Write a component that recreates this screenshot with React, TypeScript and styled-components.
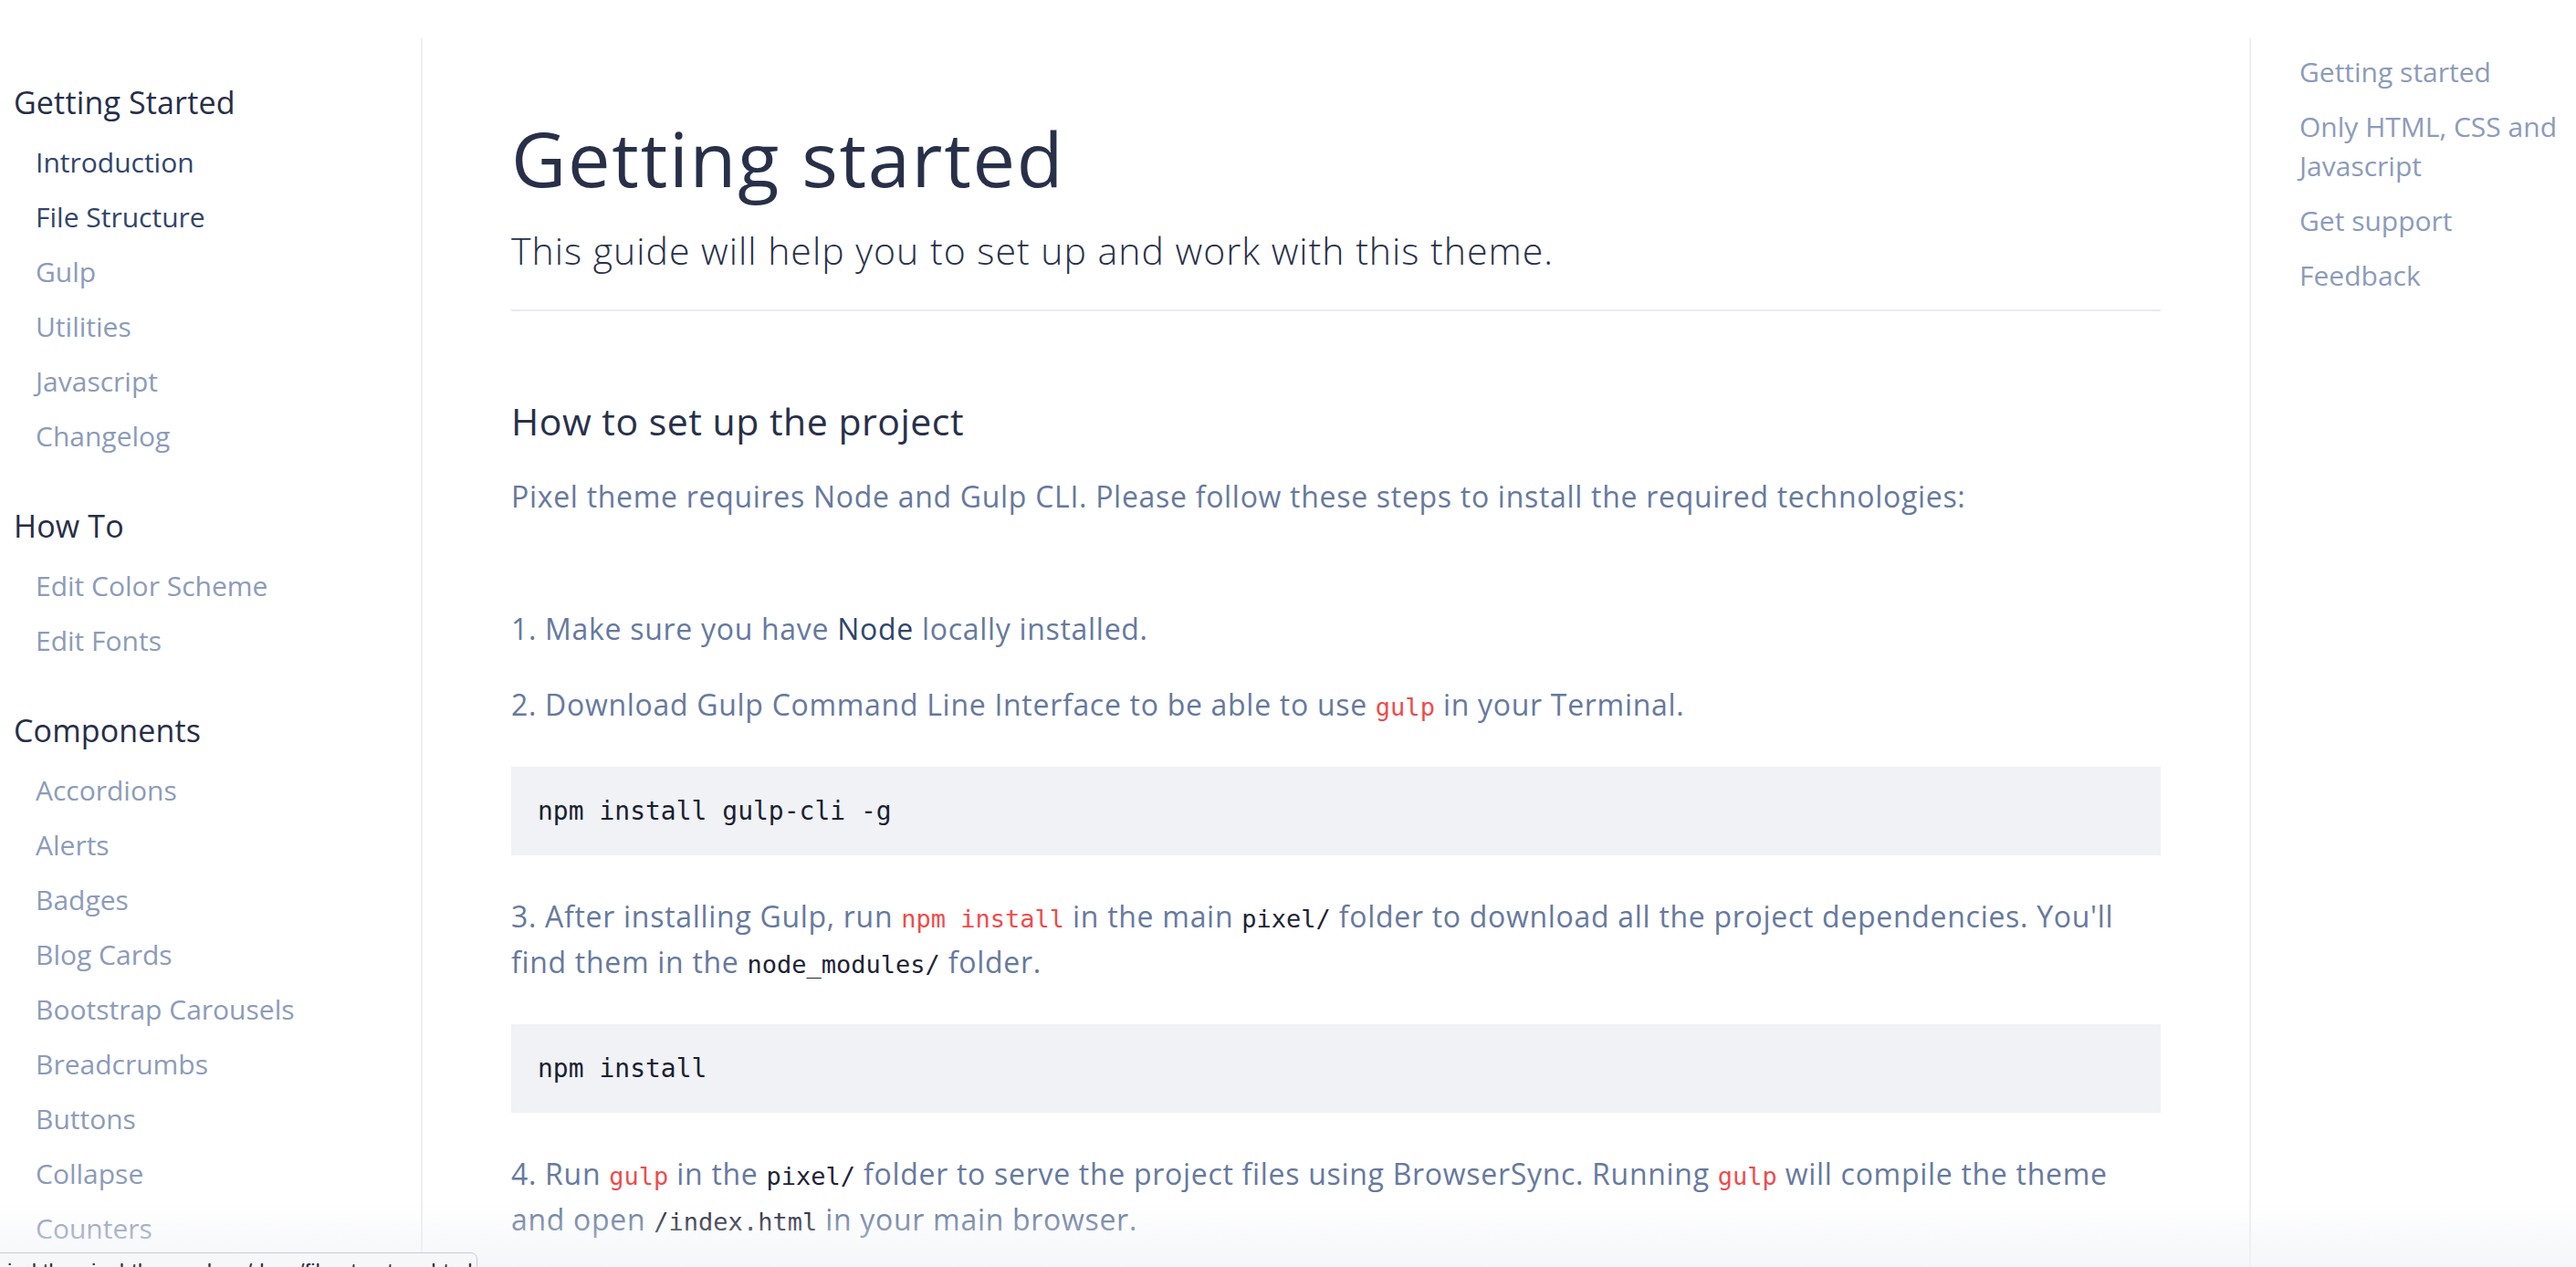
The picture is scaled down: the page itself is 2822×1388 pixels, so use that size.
import React from "react";
import styled, { createGlobalStyle } from "styled-components";

const Global = createGlobalStyle`
  html, body { margin: 0; padding: 0; background: #ffffff; }
  body {
    font-family: "Open Sans", "Noto Sans", sans-serif;
    color: #66799e;
    overflow: hidden;
    height: 1388px;
  }
  * { box-sizing: border-box; }
`;

const Page = styled.div`
  display: grid;
  grid-template-columns: 463px 1fr 358px;
  padding-top: 42px;
  height: 1388px;
  overflow: hidden;
`;

const Sidebar = styled.nav`
  border-right: 2px solid #eceef3;
  padding: 46px 0 0 15px;
  display: flex;
  flex-direction: column;
`;

const Group = styled.div`
  display: flex;
  flex-direction: column;
  margin-bottom: 44px;
`;

const GroupTitle = styled.div`
  font-size: 34px;
  letter-spacing: 0.15px;
  line-height: 48px;
  color: #262e48;
  font-weight: 500;
  margin-bottom: 12px;
`;

const NavItem = styled.a<{ $active?: boolean }>`
  font-size: 30px;
  line-height: 60px;
  padding-left: 24px;
  color: ${(p) => (p.$active ? "#30456b" : "#8c9bb9")};
  text-decoration: none;
  white-space: nowrap;
`;

const Main = styled.main`
  padding: 81px 97px 0 97px;
  display: flex;
  flex-direction: column;
`;

const Title = styled.h1`
  margin: 0;
  font-size: 83px;
  letter-spacing: 1.7px;
  line-height: 100px;
  font-weight: 400;
  color: #283049;
`;

const Lead = styled.p`
  margin: 0;
  font-size: 41px;
  letter-spacing: 1px;
  line-height: 56px;
  font-weight: 300;
  color: #283049;
  padding-top: 23px;
`;

const Divider = styled.hr`
  border: 0;
  border-top: 2px solid #e9eaf0;
  margin: 37px 0 0 0;
`;

const SectionTitle = styled.h3`
  margin: 92px 0 0 0;
  font-size: 41px;
  letter-spacing: 0.5px;
  line-height: 56px;
  font-weight: 400;
  color: #283049;
`;

const Text = styled.p<{ $gap?: number }>`
  margin: ${(p) => p.$gap ?? 33}px 0 0 0;
  font-size: 32px;
  letter-spacing: 0.7px;
  line-height: 50px;
  font-weight: 400;
  color: #66799e;
`;

const Strong = styled.span`
  color: #30456b;
  font-weight: 500;
`;

const Code = styled.code<{ $red?: boolean }>`
  font-family: "DejaVu Sans Mono", "Liberation Mono", monospace;
  font-size: 27px;
  line-height: 1;
  letter-spacing: 0;
  color: ${(p) => (p.$red ? "#ef4b4b" : "#1e2236")};
`;

const CodeBlock = styled.pre`
  margin: 43px 0 0 0;
  background: #f0f2f6;
  height: 97px;
  padding: 0 29px;
  display: flex;
  align-items: center;
  font-family: "DejaVu Sans Mono", "Liberation Mono", monospace;
  font-size: 28px;
  color: #1b1f30;
`;

const Toc = styled.aside`
  border-left: 2px solid #eceef3;
  padding: 15px 0 0 53px;
  display: flex;
  flex-direction: column;
  gap: 17px;
`;

const TocItem = styled.a`
  font-size: 30px;
  line-height: 43px;
  color: #8c9bb9;
  text-decoration: none;
  max-width: 292px;
`;

const Fade = styled.div`
  position: fixed;
  left: 0;
  right: 0;
  bottom: 0;
  height: 70px;
  pointer-events: none;
  background: linear-gradient(to bottom, rgba(244, 245, 248, 0), rgba(240, 242, 246, 0.7));
`;

const StatusBubble = styled.div`
  position: fixed;
  left: -1px;
  bottom: -30px;
  width: 524px;
  height: 46px;
  background: #f6f7f9;
  border: 1px solid #c7cad2;
  border-radius: 0 7px 0 0;
  padding: 6px 0 0 8px;
  font-family: "Liberation Sans", Arial, sans-serif;
  font-size: 24px;
  color: #2b2f38;
  white-space: nowrap;
  overflow: hidden;
`;

const groups: { title: string; items: { label: string; active?: boolean }[] }[] = [
  {
    title: "Getting Started",
    items: [
      { label: "Introduction", active: true },
      { label: "File Structure", active: true },
      { label: "Gulp" },
      { label: "Utilities" },
      { label: "Javascript" },
      { label: "Changelog" },
    ],
  },
  {
    title: "How To",
    items: [{ label: "Edit Color Scheme" }, { label: "Edit Fonts" }],
  },
  {
    title: "Components",
    items: [
      { label: "Accordions" },
      { label: "Alerts" },
      { label: "Badges" },
      { label: "Blog Cards" },
      { label: "Bootstrap Carousels" },
      { label: "Breadcrumbs" },
      { label: "Buttons" },
      { label: "Collapse" },
      { label: "Counters" },
      { label: "Dropdowns" },
      { label: "E-commerce" },
    ],
  },
];

const toc = ["Getting started", "Only HTML, CSS and Javascript", "Get support", "Feedback"];

export default function App() {
  return (
    <>
      <Global />
      <Page>
        <Sidebar>
          {groups.map((g) => (
            <Group key={g.title}>
              <GroupTitle>{g.title}</GroupTitle>
              {g.items.map((it) => (
                <NavItem key={it.label} $active={it.active} href="#">
                  {it.label}
                </NavItem>
              ))}
            </Group>
          ))}
        </Sidebar>
        <Main>
          <Title>Getting started</Title>
          <Lead>This guide will help you to set up and work with this theme.</Lead>
          <Divider />
          <SectionTitle>How to set up the project</SectionTitle>
          <Text $gap={30}>
            Pixel theme requires Node and Gulp CLI. Please follow these steps to install the required
            technologies:
          </Text>
          <Text $gap={95}>
            1. Make sure you have <Strong>Node</Strong> locally installed.
          </Text>
          <Text>
            2. Download Gulp Command Line Interface to be able to use <Code $red>gulp</Code> in your
            Terminal.
          </Text>
          <CodeBlock>npm install gulp-cli -g</CodeBlock>
          <Text $gap={42}>
            3. After installing Gulp, run <Code $red>npm install</Code> in the main <Code>pixel/</Code>{" "}
            folder to download all the project dependencies. You'll find them in the{" "}
            <Code>node_modules/</Code> folder.
          </Text>
          <CodeBlock>npm install</CodeBlock>
          <Text $gap={42}>
            4. Run <Code $red>gulp</Code> in the <Code>pixel/</Code> folder to serve the project files
            using BrowserSync. Running <Code $red>gulp</Code> will compile the theme and open{" "}
            <Code>/index.html</Code> in your main browser.
          </Text>
        </Main>
        <Toc>
          {toc.map((t) => (
            <TocItem key={t} href="#">
              {t}
            </TocItem>
          ))}
        </Toc>
      </Page>
      <Fade />
      <StatusBubble>ied the pixel-theme-docs/docs/file-structure.html</StatusBubble>
    </>
  );
}
